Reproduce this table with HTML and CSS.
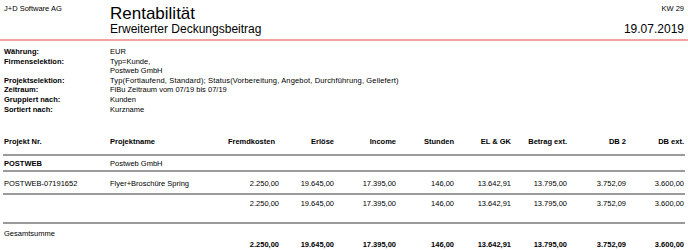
FILE: index.html
```html
<!DOCTYPE html>
<html lang="de">
<head>
<meta charset="utf-8">
<title>Rentabilität</title>
<link rel="stylesheet" href="styles.css">
</head>
<body>
<div class="page">
  <header class="top">
    <div class="company">J+D Software AG</div>
    <div class="titles">
      <div class="title">Rentabilität</div>
      <div class="subtitle">Erweiterter Deckungsbeitrag</div>
    </div>
    <div class="meta">
      <div class="kw">KW 29</div>
      <div class="date">19.07.2019</div>
    </div>
  </header>

  <dl class="info">
    <dt>Währung:</dt><dd>EUR</dd>
    <dt>Firmenselektion:</dt><dd>Typ=Kunde,<br>Postweb GmbH</dd>
    <dt>Projektselektion:</dt><dd class="spaced">Typ(Fortlaufend, Standard); Status(Vorbereitung, Angebot, Durchführung, Geliefert)</dd>
    <dt>Zeitraum:</dt><dd>FiBu Zeitraum vom 07/19 bis 07/19</dd>
    <dt>Gruppiert nach:</dt><dd>Kunden</dd>
    <dt>Sortiert nach:</dt><dd>Kurzname</dd>
  </dl>

  <table class="report">
    <colgroup>
      <col class="c-nr"><col class="c-name"><col class="c-fk"><col class="c-er"><col class="c-in">
      <col class="c-st"><col class="c-el"><col class="c-be"><col class="c-db2"><col class="c-dbx">
    </colgroup>
    <thead>
      <tr class="head">
        <th class="txt">Projekt Nr.</th>
        <th class="txt name">Projektname</th>
        <th class="num fk">Fremdkosten</th>
        <th class="num">Erlöse</th>
        <th class="num">Income</th>
        <th class="num">Stunden</th>
        <th class="num">EL &amp; GK</th>
        <th class="num">Betrag ext.</th>
        <th class="num">DB 2</th>
        <th class="num">DB ext.</th>
      </tr>
    </thead>
    <tbody>
      <tr class="group">
        <td class="txt strong">POSTWEB</td>
        <td class="txt name">Postweb GmbH</td>
        <td></td><td></td><td></td><td></td><td></td><td></td><td></td><td></td>
      </tr>
      <tr class="item">
        <td class="txt">POSTWEB-07191652</td>
        <td class="txt name">Flyer+Broschüre Spring</td>
        <td class="num">2.250,00</td>
        <td class="num">19.645,00</td>
        <td class="num">17.395,00</td>
        <td class="num">146,00</td>
        <td class="num">13.642,91</td>
        <td class="num">13.795,00</td>
        <td class="num">3.752,09</td>
        <td class="num">3.600,00</td>
      </tr>
      <tr class="subtotal">
        <td></td><td></td>
        <td class="num">2.250,00</td>
        <td class="num">19.645,00</td>
        <td class="num">17.395,00</td>
        <td class="num">146,00</td>
        <td class="num">13.642,91</td>
        <td class="num">13.795,00</td>
        <td class="num">3.752,09</td>
        <td class="num">3.600,00</td>
      </tr>
      <tr class="total-label">
        <td class="txt" colspan="10">Gesamtsumme</td>
      </tr>
      <tr class="total">
        <td></td><td></td>
        <td class="num">2.250,00</td>
        <td class="num">19.645,00</td>
        <td class="num">17.395,00</td>
        <td class="num">146,00</td>
        <td class="num">13.642,91</td>
        <td class="num">13.795,00</td>
        <td class="num">3.752,09</td>
        <td class="num">3.600,00</td>
      </tr>
    </tbody>
  </table>
</div>
</body>
</html>
```

FILE: styles.css
```css
html, body {
  margin: 0;
  padding: 0;
  background: #ffffff;
}

body {
  font-family: "Liberation Sans", Arial, sans-serif;
  color: #000000;
  font-size: 7.5px;
}

.page {
  width: 688px;
}

/* ---------- header ---------- */
.top {
  display: flex;
  align-items: stretch;
  height: 41px;
  box-sizing: border-box;
  padding: 4px 4px 3px 4px;
  border-bottom: 2px solid #f4a3a3;
}

.company {
  width: 106px;
  font-size: 7.5px;
  line-height: 10px;
}

.titles {
  flex: 1;
  padding-top: 1px;
}

.title {
  font-size: 17px;
  line-height: 17px;
}

.subtitle {
  font-size: 12px;
  line-height: 15px;
}

.meta {
  display: flex;
  flex-direction: column;
  justify-content: space-between;
  align-items: flex-end;
}

.kw {
  font-size: 7.5px;
  line-height: 10px;
}

.date {
  font-size: 12px;
  line-height: 14px;
}

/* ---------- info block ---------- */
.info {
  display: grid;
  grid-template-columns: 106px 1fr;
  margin: 0;
  padding: 6px 4px 0 4px;
  font-size: 7.5px;
  line-height: 9.6px;
}

.info dt {
  font-weight: bold;
}

.info dd {
  margin: 0;
}

.info .spaced {
  letter-spacing: 0.15px;
}

/* ---------- table ---------- */
.report {
  margin: 20px 0 0 3px;
  width: 682px;
  table-layout: fixed;
  border-collapse: collapse;
  font-size: 7.5px;
  line-height: 8px;
}

.c-nr  { width: 107px; }
.c-name { width: 112px; }
.c-fk  { width: 58px; }
.c-er  { width: 55px; }
.c-in  { width: 62px; }
.c-st  { width: 58px; }
.c-el  { width: 57px; }
.c-be  { width: 56px; }
.c-db2 { width: 59px; }
.c-dbx { width: 58px; }

.report th,
.report td {
  padding: 0;
  white-space: nowrap;
  overflow: visible;
}

.report .txt {
  text-align: left;
  padding-left: 1px;
}

.report .txt.name {
  padding-left: 0;
}

.report .num {
  text-align: right;
  padding-right: 1px;
}

.report th {
  font-weight: bold;
}

.report th.fk {
  padding-right: 5px;
}

.report .strong {
  font-weight: bold;
}

.head th {
  padding-top: 4px;
  padding-bottom: 8px;
  border-bottom: 2px solid #9a9a9a;
}

.group td {
  padding-top: 4px;
  padding-bottom: 2px;
  border-bottom: 2px solid #9a9a9a;
}

.item td {
  padding-top: 8px;
  padding-bottom: 5px;
  border-bottom: 2px solid #9a9a9a;
}

.subtotal td {
  padding-top: 5px;
  padding-bottom: 14px;
  border-bottom: 2px solid #9a9a9a;
}

.total-label td {
  padding-top: 6px;
  padding-bottom: 1px;
}

.total td {
  padding-top: 2px;
  padding-bottom: 2px;
  font-weight: bold;
}
```
